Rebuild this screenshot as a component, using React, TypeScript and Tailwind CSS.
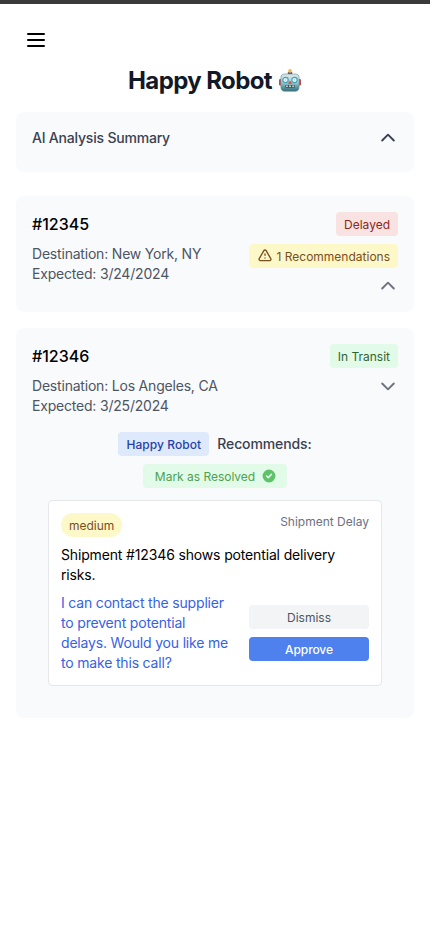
import React from "react";

function Chevron({ down = false, className = "" }: { down?: boolean; className?: string }) {
  return (
    <svg className={`h-5 w-5 ${className}`} viewBox="0 0 24 24" fill="none" stroke="currentColor" strokeWidth="2.3" strokeLinecap="round" strokeLinejoin="round">
      <path d={down ? "M19 9l-7 7-7-7" : "M5 15l7-7 7 7"} />
    </svg>
  );
}

function RobotFace() {
  return (
    <svg className="h-6 w-6" viewBox="0 0 24 24" role="img" aria-label="robot">
      <defs>
        <linearGradient id="face" x1="0" y1="0" x2="0" y2="1">
          <stop offset="0" stopColor="#dce8e8" />
          <stop offset="0.45" stopColor="#b3d0d3" />
          <stop offset="0.75" stopColor="#5d9ba5" />
          <stop offset="1" stopColor="#356d79" />
        </linearGradient>
      </defs>
      <rect x="1" y="10" width="3" height="6.5" rx="1.2" fill="#b94c50" />
      <rect x="20" y="10" width="3" height="6.5" rx="1.2" fill="#b94c50" />
      <rect x="9.8" y="2.7" width="4.4" height="3" rx="1" fill="#574b8c" />
      <circle cx="12" cy="1.900" r="1.9" fill="#f2bd55" />
      <path d="M6.5 5h11c2.300 0 3.600 1.500 3.600 3.600v9.700c0 2.600-1.500 4-4 4H6.900c-2.500 0-4-1.400-4-4V8.600c0-2.100 1.300-3.600 3.600-3.600z" fill="url(#face)" stroke="#5d8d94" strokeWidth=".6" />
      <circle cx="7.500" cy="11" r="2.700" fill="#e9fbff" stroke="#469fba" strokeWidth="1.200" />
      <circle cx="16.500" cy="11" r="2.700" fill="#e9fbff" stroke="#469fba" strokeWidth="1.200" />
      <circle cx="7.500" cy="11" r=".8" fill="#8bcde0" />
      <circle cx="16.500" cy="11" r=".8" fill="#8bcde0" />
      <path d="M12 11.400l2.100 3.400H9.900z" fill="#d64c43" />
      <rect x="7.200" y="15.900" width="9.600" height="2.800" rx="1" fill="#3f5057" />
      <path d="M8.200 17.300h1.500m1.500 0h1.600m1.500 0h1.500" stroke="#e1eeee" strokeWidth="1.500" />
    </svg>
  );
}

function WarningIcon() {
  return (
    <svg className="h-4 w-4" viewBox="0 0 24 24" fill="none" stroke="currentColor" strokeWidth="2" strokeLinecap="round" strokeLinejoin="round">
      <path d="M12 9v2m0 4h.01m-6.938 4h13.856c1.540 0 2.502-1.667 1.732-3L13.732 4c-.770-1.333-2.694-1.333-3.464 0L3.340 16c-.770 1.333.192 3 1.732 3z" />
    </svg>
  );
}

function CheckIcon() {
  return (
    <svg className="h-4 w-4 text-[#5dc268]" viewBox="0 0 20 20" fill="currentColor">
      <path fillRule="evenodd" clipRule="evenodd" d="M10 18a8 8 0 100-16 8 8 0 000 16zm3.707-9.293a1 1 0 00-1.414-1.414L9 10.586 7.707 9.293a1 1 0 00-1.414 1.414l2 2a1 1 0 001.414 0l4-4z" />
    </svg>
  );
}

function ShipmentInfo({ id, destination, expected }: { id: string; destination: string; expected: string }) {
  return (
    <div>
      <h3 className="text-base font-medium text-black">{id}</h3>
      <div className="mt-2 text-sm tracking-[-0.2px] text-[#4d5562]">
        <p>Destination: {destination}</p>
        <p>Expected: {expected}</p>
      </div>
    </div>
  );
}

export default function App() {
  return (
    <div className="min-h-screen bg-white font-['Inter',sans-serif]">
      <div className="h-1 bg-[#3a3a3a]" />
      <header className="px-6 pt-6">
        <button className="block text-black" aria-label="Menu">
          <svg className="h-6 w-6" viewBox="0 0 24 24" fill="none" stroke="currentColor" strokeWidth="2" strokeLinecap="round">
            <path d="M4 6h16M4 12h16M4 18h16" />
          </svg>
        </button>
      </header>
      <main className="px-4 pt-[13px]">
        <h1 className="flex h-8 items-center justify-center gap-1.5 text-2xl font-bold tracking-tight text-[#131827]">
          Happy Robot <RobotFace />
        </h1>

        <section className="mt-[15px] h-[60px] rounded-lg bg-[#f9fafc] p-4">
          <div className="flex items-center justify-between text-[#394150]">
            <h2 className="text-sm font-medium tracking-[-0.2px]">AI Analysis Summary</h2>
            <Chevron />
          </div>
        </section>

        <section className="mt-6 flex justify-between rounded-lg bg-[#f9fafc] p-4">
          <ShipmentInfo id="#12345" destination="New York, NY" expected="3/24/2024" />
          <div className="flex flex-col items-end gap-2 text-xs">
            <span className="rounded bg-[#f8e3e2] px-2 pt-[5px] pb-[3px] text-[#8b2822]">Delayed</span>
            <span className="flex h-6 items-center gap-1 rounded bg-[#fdf8c8] px-2 text-[#7b4e1e]">
              <WarningIcon />
              <span className="pt-0.5">1 Recommendations</span>
            </span>
            <Chevron className="text-[#6c727f]" />
          </div>
        </section>

        <section className="mt-4 rounded-lg bg-[#f9fafc] px-4 pt-4 pb-8">
          <div className="flex justify-between">
            <ShipmentInfo id="#12346" destination="Los Angeles, CA" expected="3/25/2024" />
            <div className="flex flex-col items-end gap-2 text-xs">
              <span className="rounded bg-[#e2fae8] px-2 pt-[5px] pb-[3px] text-[#2f6437]">In Transit</span>
              <Chevron down className="text-[#6c727f]" />
            </div>
          </div>

          <div className="mt-4 flex items-center justify-center gap-2">
            <span className="rounded bg-[#dee9fc] px-2 pt-[5px] pb-[3px] text-xs font-medium tracking-[0.07px] text-[#263fa9]">Happy Robot</span>
            <span className="text-sm font-medium tracking-[-0.12px] text-[#394150]">Recommends:</span>
          </div>
          <div className="mt-2 flex justify-center">
            <button className="flex h-6 items-center gap-1.5 rounded bg-[#e2fae8] pr-[9.5px] pl-[11.5px] text-xs text-[#4fa150]">
              <span className="pt-0.5 tracking-[-0.02px]">Mark as Resolved</span>
              <CheckIcon />
            </button>
          </div>

          <article className="mx-4 mt-3 rounded border border-[#e5e7eb] bg-white p-3">
            <div className="flex items-start justify-between text-xs">
              <span className="rounded-full bg-[#fdf8c8] px-2 pt-[5px] pb-[3px] text-[#7b4e1e]">medium</span>
              <span className="pt-px text-[#6c727f]">Shipment Delay</span>
            </div>
            <p className="mt-2 text-sm tracking-[-0.15px] text-black">Shipment #12346 shows potential delivery risks.</p>
            <div className="mt-2 flex items-center justify-between">
              <p className="w-[172px] text-sm tracking-[-0.18px] text-[#3662e3]">
                I can contact the supplier to prevent potential delays. Would you like me to make this call?
              </p>
              <div className="flex w-[120px] flex-col gap-2 text-xs">
                <button className="rounded bg-[#f3f4f6] px-3 pt-[5px] pb-[3px] text-[#4d5562]">Dismiss</button>
                <button className="rounded bg-[#4e80ee] px-3 pt-[5px] pb-[3px] font-medium tracking-[-0.1px] text-white">Approve</button>
              </div>
            </div>
          </article>
        </section>
      </main>
    </div>
  );
}
